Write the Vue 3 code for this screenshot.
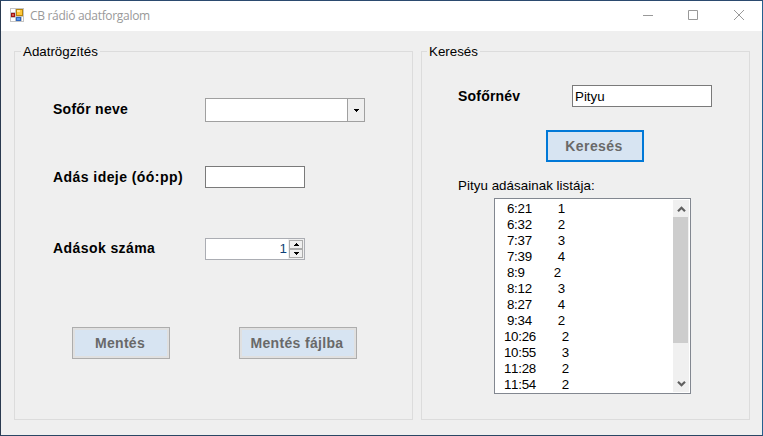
<script setup>
import { ref } from 'vue'

const driver = ref('')
const time = ref('')
const count = ref('1')
const query = ref('Pityu')
const entries = [
  ['6:21', 1], ['6:32', 2], ['7:37', 3], ['7:39', 4], ['8:9', 2], ['8:12', 3],
  ['8:27', 4], ['9:34', 2], ['10:26', 2], ['10:55', 3], ['11:28', 2], ['11:54', 2],
]
</script>

<template>
  <div class="window">
    <header class="titlebar">
      <svg class="app-icon" width="14" height="14" viewBox="0 0 14 14" shape-rendering="crispEdges">
        <rect width="14" height="14" fill="#c4c4c4" />
        <rect x="1" y="1" width="4" height="3" fill="#fff" />
        <rect x="1" y="10" width="4" height="3" fill="#fff" />
        <rect x="12" y="9" width="1" height="4" fill="#fff" />
        <rect x="1" y="5" width="4" height="4" fill="#9c1414" />
        <rect x="2" y="6" width="2" height="2" fill="#dc5a4c" />
        <rect x="6" y="1" width="7" height="7" fill="#b8860b" />
        <rect x="7" y="2" width="5" height="5" fill="#ffc83a" />
        <rect x="7" y="2" width="3" height="2" fill="#ffe695" />
        <rect x="6" y="9" width="5" height="4" fill="#2f66bd" />
        <rect x="7" y="10" width="3" height="2" fill="#5b98ea" />
      </svg>
      <span class="title">CB rádió adatforgalom</span>
      <div class="controls">
        <svg width="10" height="10" viewBox="0 0 10 10"><path d="M0 5.5H10" /></svg>
        <svg width="10" height="10" viewBox="0 0 10 10"><path d="M.5 .5H9.5V9.5H.5Z" /></svg>
        <svg width="11" height="10" viewBox="0 0 11 10"><path d="M1 0L11 10M11 0L1 10" /></svg>
      </div>
    </header>

    <main class="body">
      <section class="group record">
        <h2 class="legend">Adatrögzítés</h2>
        <div class="form">
          <div class="row"><label class="l-driver">Sofőr neve</label>
            <div class="combo">
              <span class="value">{{ driver }}</span>
              <span class="drop"><svg width="5" height="3" viewBox="0 0 5 3" shape-rendering="crispEdges"><path d="M0 0H5V1H4V2H3V3H2V2H1V1H0Z" /></svg></span>
            </div>
          </div>
          <div class="row"><label class="l-time">Adás ideje (óó:pp)</label>
            <div class="box small">{{ time }}</div>
          </div>
          <div class="row"><label class="l-count">Adások száma</label>
            <div class="spinner">
              <span class="number">{{ count }}</span>
              <span class="arrows">
                <i><svg width="5" height="3" viewBox="0 0 5 3" shape-rendering="crispEdges"><path d="M2 0H3V1H4V2H5V3H0V2H1V1H2Z" /></svg></i>
                <i><svg width="5" height="3" viewBox="0 0 5 3" shape-rendering="crispEdges"><path d="M0 0H5V1H4V2H3V3H2V2H1V1H0Z" /></svg></i>
              </span>
            </div>
          </div>
        </div>
        <div class="actions">
          <button class="btn">Mentés</button>
          <button class="btn wide">Mentés fájlba</button>
        </div>
      </section>

      <section class="group search">
        <h2 class="legend l-search">Keresés</h2>
        <div class="query"><label class="l-name">Sofőrnév</label>
          <div class="box">{{ query }}</div>
        </div>
        <button class="btn focus">Keresés</button>
        <p class="caption">Pityu adásainak listája:</p>
        <div class="listbox">
          <ul>
            <li v-for="[t, n] in entries" :key="t" :class="{ long: t.length === 5, short: t.length === 3 }">
              <span>{{ t }}</span><span>{{ n }}</span>
            </li>
          </ul>
          <div class="scrollbar">
            <svg width="9" height="6" viewBox="0 0 9 6"><path d="M1 5.2L4.5 1.7L8 5.2" /></svg>
            <div class="thumb"></div>
            <svg width="9" height="6" viewBox="0 0 9 6"><path d="M1 .8L4.5 4.3L8 .8" /></svg>
          </div>
        </div>
      </section>
    </main>
  </div>
</template>

<style>
body { margin: 0; overflow: hidden; }
</style>

<style scoped>
* { box-sizing: border-box; }
.window {
  width: 763px;
  height: 436px;
  border: 1px solid;
  border-color: #2b4a6f #24608f #2a4664 #2a3a50;
  background: #efefef;
  color: #000;
  font: 13.33px/16px "Liberation Sans", Arial, sans-serif;
}
.titlebar {
  height: 30px;
  display: flex;
  align-items: center;
  padding-left: 9px;
  background: #fff;
}
.app-icon { margin-bottom: 2px; }
.title {
  margin-left: 6px;
  color: #999;
  font: 12px/16px "Open Sans", "Noto Sans", sans-serif;
  letter-spacing: -0.31px;
}
.controls {
  margin-left: auto;
  padding: 0 18px 2px 0;
  display: flex;
  gap: 35px;
}
.controls svg { fill: none; stroke: #999; stroke-width: 1; }
.body {
  display: flex;
  gap: 8px;
  padding: 20px 12px 15px 13px;
}
.group {
  height: 369px;
  border: 1px solid #dcdcdc;
}
.record { width: 399px; }
.search { width: 329px; }
.legend {
  width: max-content;
  margin: -8px 0 0 6px;
  padding: 0 2px;
  background: #efefef;
  font-size: 13.33px;
  font-weight: 400;
  line-height: 16px;
}
.l-search { margin-left: 5px; }
label {
  font-weight: 700;
  font-size: 14px;
  white-space: nowrap;
}
.row label { padding-bottom: 2px; }
.l-driver { letter-spacing: 0.27px; }
.l-time { letter-spacing: 0.44px; }
.l-count { letter-spacing: 0.42px; }
.l-name { letter-spacing: 0.2px; }
.form { padding: 38px 0 0 38px; }
.row {
  display: grid;
  grid-template-columns: 152px auto;
  justify-content: start;
  align-items: center;
  height: 24px;
}
.row + .row { margin-top: 44px; }
.row + .row + .row { margin-top: 47px; }
.combo {
  width: 160px;
  height: 24px;
  display: flex;
  border: 1px solid #a0a0a0;
  background: #fff;
}
.value { flex: 1; }
.drop {
  width: 17px;
  display: flex;
  align-items: center;
  justify-content: center;
  border-left: 1px solid #a0a0a0;
  background: #efefef;
}
.box {
  width: 140px;
  height: 22px;
  padding: 3px 2px;
  border: 1px solid #7a7a7a;
  background: #fff;
}
.small { width: 100px; align-self: start; }
.spinner {
  width: 100px;
  height: 22px;
  display: flex;
  justify-content: flex-end;
  border: 1px solid #abadb3;
  background: #fff;
}
.number { padding: 2px 1px 0 0; color: #0d3f78; }
.arrows {
  display: flex;
  flex-direction: column;
  padding: 1px;
  background: #efefef;
}
.arrows i {
  width: 14px;
  height: 9px;
  display: flex;
  align-items: center;
  justify-content: center;
  border: 1px solid #acacac;
}
.actions {
  display: flex;
  gap: 69px;
  padding: 66px 0 0 57px;
}
.btn {
  display: flex;
  justify-content: center;
  align-items: center;
  width: 98px;
  height: 32px;
  padding: 0 2px 0 0;
  border: 1px solid #adadad;
  background: #d7e4f2;
  box-shadow: inset 0 0 0 2px #e0e0e0;
  color: #696969;
  font: 700 14px/16px "Liberation Sans", Arial, sans-serif;
  letter-spacing: 0.33px;
}
.wide { width: 118px; }
.focus {
  margin: 23px 0 0 124px;
  border: 2px solid #0078d7;
  box-shadow: none;
  letter-spacing: 0.42px;
}
.query {
  display: grid;
  grid-template-columns: 114px auto;
  justify-content: start;
  align-items: center;
  padding: 25px 0 0 36px;
}
.caption { margin: 16px 0 4px 36px; letter-spacing: 0.05px; }
.listbox {
  width: 197px;
  height: 196px;
  margin-left: 72px;
  padding: 1px;
  display: flex;
  border: 1px solid #828790;
  background: #fff;
}
.listbox ul {
  flex: 1;
  margin: 0;
  padding: 1px 0 0 10px;
  list-style: none;
  font-kerning: none;
}
.listbox li {
  height: 16px;
  display: flex;
  gap: 26px;
  padding-left: 1px;
  letter-spacing: -0.3px;
}
.listbox li.long { margin-left: -3px; }
.listbox li.short { gap: 29px; }
.scrollbar {
  width: 16px;
  display: flex;
  flex-direction: column;
  align-items: center;
  justify-content: space-between;
  padding: 6px 0 5px;
  background: #f0f0f0;
}
.scrollbar svg { fill: none; stroke: #606060; stroke-width: 2.2; }
.thumb {
  width: 15px;
  height: 126px;
  margin: 5px 0 auto;
  align-self: flex-start;
  background: #cdcdcd;
}
</style>
